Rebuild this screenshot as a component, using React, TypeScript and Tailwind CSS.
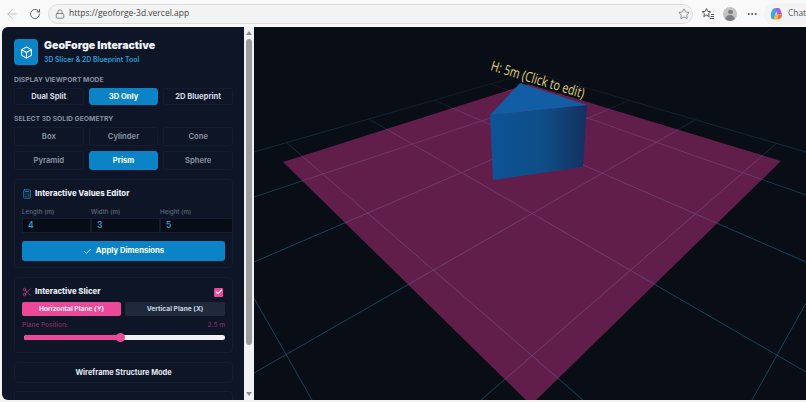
import React from 'react';
import { ArrowLeft, Box, Check, Lock, MoreHorizontal, RotateCw, Scissors, Star, Calculator } from 'lucide-react';

const gridLines = [
  [254, 152, 532, 72],
  [532, 72, 806, 152],
  [254, 197, 583, 87],
  [254, 262, 630, 100],
  [254, 373, 695, 120],
  [481, 400, 777, 143],
  [752, 400, 806, 303],
  [254, 298, 312, 400],
  [287, 143, 583, 400],
  [369, 119, 806, 372],
  [434, 100, 806, 262],
  [491, 84, 806, 195],
];

const planePoints = '283,162 528,84 781,161 531,405';

const Viewport = () => (
  <div className="flex-1 h-full bg-[#090d15] overflow-hidden">
    <svg width="552" height="373" viewBox="254 27 552 373" className="block">
      <defs>
        <linearGradient id="floorLine" gradientUnits="userSpaceOnUse" x1="0" y1="90" x2="0" y2="230">
          <stop offset="0" stopColor="#121f29" />
          <stop offset="1" stopColor="#1a5069" />
        </linearGradient>
        <linearGradient id="planeLine" gradientUnits="userSpaceOnUse" x1="0" y1="90" x2="0" y2="230">
          <stop offset="0" stopColor="#75346a" />
          <stop offset="1" stopColor="#6f4279" />
        </linearGradient>
        <linearGradient id="prismFront" gradientUnits="userSpaceOnUse" x1="490" y1="0" x2="587" y2="0">
          <stop offset="0" stopColor="#0d5396" />
          <stop offset="0.55" stopColor="#0e4e87" />
          <stop offset="1" stopColor="#14305f" />
        </linearGradient>
        <clipPath id="planeClip">
          <polygon points={planePoints} />
        </clipPath>
      </defs>
      {gridLines.map(([x1, y1, x2, y2], i) => (
        <line key={i} x1={x1} y1={y1} x2={x2} y2={y2} stroke="url(#floorLine)" strokeWidth="0.8" />
      ))}
      <polygon points={planePoints} fill="#611e4a" />
      <g clipPath="url(#planeClip)">
        {gridLines.map(([x1, y1, x2, y2], i) => (
          <line key={i} x1={x1} y1={y1} x2={x2} y2={y2} stroke="url(#planeLine)" strokeWidth="0.8" />
        ))}
      </g>
      <polygon points="490,115 587,105 583,167 493,180" fill="url(#prismFront)" />
      <polygon points="490,115 520,83 587,105" fill="#125da3" />
      <text
        x="490"
        y="70"
        fill="#d8c776"
        fontSize="14"
        fontFamily="'Noto Sans', sans-serif"
        transform="rotate(17 490 70)"
        textLength="97"
        lengthAdjust="spacingAndGlyphs"
      >
        H: 5m (Click to edit)
      </text>
    </svg>
  </div>
);

const BrowserBar = () => (
  <div className="h-[27px] shrink-0 flex items-center bg-[#f9f9f9] font-['Open_Sans',sans-serif]">
    <ArrowLeft size={14} strokeWidth={1.4} className="ml-[5px] shrink-0 text-[#b5b5b5]" />
    <RotateCw size={12} strokeWidth={1.6} className="ml-[10px] shrink-0 text-[#444444]" />
    <div className="ml-[7px] w-[645px] shrink-0 h-[20px] rounded-full bg-[#f3f3f3] border border-[#dedede] flex items-center pl-[6px] pr-[2px]">
      <Lock size={10} strokeWidth={1.6} className="text-[#555555]" />
      <span className="ml-[4px] text-[8.5px] text-[#444444]">https://geoforge-3d.vercel.app</span>
      <Star size={12} strokeWidth={1.3} className="ml-auto text-[#555555]" />
    </div>
    <svg width="14" height="14" viewBox="0 0 14 14" fill="none" stroke="#555555" strokeWidth="1" className="ml-[8px] shrink-0">
      <path d="M5.500 1.500l1.300 2.900 3 .3-2.300 2 .7 3-2.700-1.600-2.700 1.600.7-3-2.300-2 3-.3z" />
      <path d="M10 7.500h3M9.500 9.500h3.500M9 11.500h4" />
    </svg>
    <div className="ml-[8px] shrink-0 w-[14px] h-[14px] rounded-full bg-[#c4c4c4] flex flex-col items-center overflow-hidden">
      <div className="mt-[3px] w-[5px] h-[5px] rounded-full bg-[#7e7e7e]" />
      <div className="mt-[1px] w-[10px] h-[6px] rounded-t-full bg-[#7e7e7e]" />
    </div>
    <MoreHorizontal size={12} strokeWidth={2} className="ml-[9px] shrink-0 text-[#444444]" />
    <div className="ml-[6px] w-[42px] shrink-0 h-[22px] rounded-l-full bg-[#f3f3f3] flex items-center pl-[5px]">
      <svg width="15" height="15" viewBox="0 0 16 16" className="shrink-0">
        <path d="M2 10c0-4 2-8 5-8h2l-2 6-2 6H4c-1.300 0-2-2-2-4z" fill="#3aa6e8" />
        <path d="M7 2h3c1.500 0 2 1 2.500 3L14 9h-4C8.500 9 8 8 8 6z" fill="#a85ce0" />
        <path d="M5 14l1-3c.5-1.500 1-2 2-2h6c0 3-2 5-4 5z" fill="#f2703c" />
        <path d="M6 11c.5-1.500 1-2 2-2h2l-1 5H5z" fill="#f6b73c" />
        <path d="M2 10l3 4H4c-1.300 0-2-2-2-4z" fill="#4cc38a" />
      </svg>
      <span className="ml-[4px] text-[8.4px] text-[#555555]">Chat</span>
    </div>
  </div>
);

const modeButtons = ['Dual Split', '3D Only', '2D Blueprint'];
const solidButtons = ['Box', 'Cylinder', 'Cone', 'Pyramid', 'Prism', 'Sphere'];
const dimensions = [
  { label: 'Length (m)', value: '4', width: 'w-[69px]' },
  { label: 'Width (m)', value: '3', width: 'w-[69px]' },
  { label: 'Height (m)', value: '5', width: 'w-[73px]' },
];

const Sidebar = () => (
  <div className="w-[242px] h-full ml-[2px] shrink-0 bg-[#0d1526] rounded-l-[6px] overflow-hidden pl-[12px] pt-[12px] font-['Inter',sans-serif]">
    <div className="w-[219px]">
      <div className="flex items-center gap-[6px] h-[26px]">
        <div className="w-[24px] h-[26px] rounded-[4px] bg-[#0a84c6] flex items-center justify-center">
          <Box size={13} strokeWidth={2} className="text-white" />
        </div>
        <div>
          <h1 className="text-[10.6px] leading-[14px] font-black text-[#f1f5f9]">GeoForge Interactive</h1>
          <p className="text-[6.9px] leading-[10px] mt-[2px] font-semibold text-[#2b9fd8]">3D Slicer &amp; 2D Blueprint Tool</p>
        </div>
      </div>

      <p className="mt-[10px] text-[6.8px] leading-[10px] font-bold text-[#8490a2]">DISPLAY VIEWPORT MODE</p>
      <div className="mt-[3px] grid grid-cols-3 gap-[5px]">
        {modeButtons.map((name) => (
          <div
            key={name}
            className={`h-[17px] rounded-[3px] border flex items-center justify-center text-[7.6px] font-bold ${
              name === '3D Only' ? 'bg-[#0a84c6] border-[#0a84c6] text-white' : 'border-[#141d30] text-[#d5dbe5]'
            }`}
          >
            {name}
          </div>
        ))}
      </div>

      <p className="mt-[9px] text-[6.8px] leading-[10px] font-bold text-[#8490a2]">SELECT 3D SOLID GEOMETRY</p>
      <div className="mt-[3px] grid grid-cols-3 gap-[5px]">
        {solidButtons.map((name) => (
          <div
            key={name}
            className={`h-[19px] rounded-[3px] border flex items-center justify-center text-[7.6px] font-bold ${
              name === 'Prism' ? 'bg-[#0a84c6] border-[#0a84c6] text-white' : 'border-[#141d30] text-[#7f8a9b]'
            }`}
          >
            {name}
          </div>
        ))}
      </div>

      <div className="mt-[9px] h-[89px] rounded-[4px] border border-[#141d30] px-[7px] pt-[8px]">
        <div className="flex items-center gap-[3px] h-[11px]">
          <Calculator size={10} strokeWidth={1.6} className="text-[#2b9fd8]" />
          <span className="text-[7.8px] font-extrabold text-[#e6ebf2]">Interactive Values Editor</span>
        </div>
        <div className="mt-[8px] flex w-[211px]">
          {dimensions.map((d) => (
            <div key={d.label} className={d.width}>
              <p className="text-[6.2px] leading-[9px] font-medium text-[#5f6b7d]">{d.label}</p>
              <div className="mt-[2px] h-[15px] bg-[#080c16] border border-[#141d30] pl-[5px] flex items-center text-[8.5px] font-semibold text-[#2b9fd8]">
                {d.value}
              </div>
            </div>
          ))}
        </div>
        <div className="mt-[8px] w-[203px] h-[20px] rounded-[3px] bg-[#0a84c6] flex items-center justify-center gap-[4px] text-[7.7px] font-bold text-white">
          <Check size={9} strokeWidth={2} />
          Apply Dimensions
        </div>
      </div>

      <div className="mt-[9px] h-[76px] rounded-[4px] border border-[#141d30] px-[7px] pt-[9px]">
        <div className="flex items-center h-[10px] pr-[1px]">
          <Scissors size={10} strokeWidth={1.6} className="text-[#ec4899]" />
          <span className="ml-[3px] text-[7.8px] font-extrabold text-[#e6ebf2]">Interactive Slicer</span>
          <div className="ml-auto mr-[1px] w-[9px] h-[9px] rounded-[1px] bg-[#ec4899] flex items-center justify-center">
            <Check size={8} strokeWidth={3.5} className="text-white" />
          </div>
        </div>
        <div className="mt-[5px] w-[203px] flex gap-[4px]">
          <div className="w-[99px] h-[14px] rounded-[2px] bg-[#ec4899] flex items-center justify-center text-[6.7px] font-bold text-[#fff1f7]">
            Horizontal Plane (Y)
          </div>
          <div className="w-[100px] h-[14px] rounded-[2px] bg-[#1e293b] flex items-center justify-center text-[6.7px] font-bold text-[#cbd5e1]">
            Vertical Plane (X)
          </div>
        </div>
        <div className="mt-[5px] w-[203px] flex justify-between text-[6.5px] leading-[9px] font-medium text-[#8a2c64]">
          <span>Plane Position:</span>
          <span>2.5 m</span>
        </div>
        <div className="relative mt-[5px] ml-[2px] w-[201px] h-[5px] rounded-full bg-[#f1f1f1]">
          <div className="w-[97px] h-[5px] rounded-full bg-[#ec4899]" />
          <div className="absolute left-[92px] top-[-2px] w-[9px] h-[9px] rounded-full bg-[#ec4899]" />
        </div>
      </div>

      <div className="mt-[9px] h-[21px] rounded-[4px] border border-[#141d30] flex items-center justify-center text-[7.4px] font-bold text-[#e6ebf2]">
        Wireframe Structure Mode
      </div>

      <div className="mt-[8px] h-[40px] rounded-[4px] border border-[#141d30]" />
    </div>
  </div>
);

const Scrollbar = () => (
  <div className="w-[10px] h-full shrink-0 bg-[#f1f1f1] flex flex-col items-center">
    <div className="mt-[4px] w-0 h-0 border-x-[3px] border-x-transparent border-b-[4px] border-b-[#8c8c8c]" />
    <div className="mt-[4px] w-[6px] h-[306px] rounded-full bg-[#9c9c9c]" />
    <div className="mt-auto mb-[4px] w-0 h-0 border-x-[3px] border-x-transparent border-t-[4px] border-t-[#8c8c8c]" />
  </div>
);

export default function App() {
  return (
    <div className="w-[806px] h-[402px] overflow-hidden bg-[#f1f3f3] flex flex-col">
      <BrowserBar />
      <div className="h-[373px] flex">
        <Sidebar />
        <Scrollbar />
        <Viewport />
      </div>
    </div>
  );
}
